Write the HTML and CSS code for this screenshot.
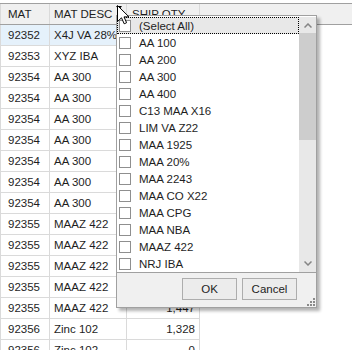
FILE: index.html
```html
<!DOCTYPE html>
<html lang="en">

<head>
  <meta charset="UTF-8">
  <meta name="viewport" content="width=device-width, initial-scale=1.0">
  <title>Shipments | Filter</title>
  <link rel="stylesheet" href="styles.css">
</head>

<body>
  <div class="sheet">

    <!-- Grid -->
    <div class="grid">
      <div class="row head">
        <div class="cell c-mat">MAT</div>
        <div class="cell c-desc">MAT DESC <span class="filter-btn"></span></div>
        <div class="cell c-qty">SHIP QTY</div>
        <div class="cell c-fill"></div>
      </div>

      <!-- qty values under the open dropdown are not shown -->
      <div class="row selected">
        <div class="cell c-mat">92352</div>
        <div class="cell c-desc">X4J VA 28%</div>
        <div class="cell c-qty"></div>
        <div class="cell c-fill"></div>
      </div>
      <div class="row">
        <div class="cell c-mat">92353</div>
        <div class="cell c-desc">XYZ IBA</div>
        <div class="cell c-qty"></div>
        <div class="cell c-fill"></div>
      </div>
      <div class="row">
        <div class="cell c-mat">92354</div>
        <div class="cell c-desc">AA 300</div>
        <div class="cell c-qty"></div>
        <div class="cell c-fill"></div>
      </div>
      <div class="row">
        <div class="cell c-mat">92354</div>
        <div class="cell c-desc">AA 300</div>
        <div class="cell c-qty"></div>
        <div class="cell c-fill"></div>
      </div>
      <div class="row">
        <div class="cell c-mat">92354</div>
        <div class="cell c-desc">AA 300</div>
        <div class="cell c-qty"></div>
        <div class="cell c-fill"></div>
      </div>
      <div class="row">
        <div class="cell c-mat">92354</div>
        <div class="cell c-desc">AA 300</div>
        <div class="cell c-qty"></div>
        <div class="cell c-fill"></div>
      </div>
      <div class="row">
        <div class="cell c-mat">92354</div>
        <div class="cell c-desc">AA 300</div>
        <div class="cell c-qty"></div>
        <div class="cell c-fill"></div>
      </div>
      <div class="row">
        <div class="cell c-mat">92354</div>
        <div class="cell c-desc">AA 300</div>
        <div class="cell c-qty"></div>
        <div class="cell c-fill"></div>
      </div>
      <div class="row">
        <div class="cell c-mat">92354</div>
        <div class="cell c-desc">AA 300</div>
        <div class="cell c-qty"></div>
        <div class="cell c-fill"></div>
      </div>
      <div class="row">
        <div class="cell c-mat">92355</div>
        <div class="cell c-desc">MAAZ 422</div>
        <div class="cell c-qty"></div>
        <div class="cell c-fill"></div>
      </div>
      <div class="row">
        <div class="cell c-mat">92355</div>
        <div class="cell c-desc">MAAZ 422</div>
        <div class="cell c-qty"></div>
        <div class="cell c-fill"></div>
      </div>
      <div class="row">
        <div class="cell c-mat">92355</div>
        <div class="cell c-desc">MAAZ 422</div>
        <div class="cell c-qty"></div>
        <div class="cell c-fill"></div>
      </div>
      <div class="row">
        <div class="cell c-mat">92355</div>
        <div class="cell c-desc">MAAZ 422</div>
        <div class="cell c-qty"></div>
        <div class="cell c-fill"></div>
      </div>
      <div class="row">
        <div class="cell c-mat">92355</div>
        <div class="cell c-desc">MAAZ 422</div>
        <div class="cell c-qty">1,447</div>
        <div class="cell c-fill"></div>
      </div>
      <div class="row">
        <div class="cell c-mat">92356</div>
        <div class="cell c-desc">Zinc 102</div>
        <div class="cell c-qty">1,328</div>
        <div class="cell c-fill"></div>
      </div>
      <div class="row">
        <div class="cell c-mat">92356</div>
        <div class="cell c-desc">Zinc 102</div>
        <div class="cell c-qty">0</div>
        <div class="cell c-fill"></div>
      </div>
    </div>

    <!-- Filter dropdown -->
    <div class="filter-popup">
      <div class="list-area">
        <div class="list">
          <div class="item focused"><span class="check"></span>(Select All)</div>
          <div class="item"><span class="check"></span>AA 100</div>
          <div class="item"><span class="check"></span>AA 200</div>
          <div class="item"><span class="check"></span>AA 300</div>
          <div class="item"><span class="check"></span>AA 400</div>
          <div class="item"><span class="check"></span>C13 MAA X16</div>
          <div class="item"><span class="check"></span>LIM VA Z22</div>
          <div class="item"><span class="check"></span>MAA 1925</div>
          <div class="item"><span class="check"></span>MAA 20%</div>
          <div class="item"><span class="check"></span>MAA 2243</div>
          <div class="item"><span class="check"></span>MAA CO X22</div>
          <div class="item"><span class="check"></span>MAA CPG</div>
          <div class="item"><span class="check"></span>MAA NBA</div>
          <div class="item"><span class="check"></span>MAAZ 422</div>
          <div class="item"><span class="check"></span>NRJ IBA</div>
        </div>
        <div class="scrollbar">
          <div class="sb-btn">
            <svg width="8" height="5" viewBox="0 0 8 5"><path d="M0.5 4.5 L4 1 L7.5 4.5" fill="none" stroke="#858585" stroke-width="1.5"/></svg>
          </div>
          <div class="sb-thumb"></div>
          <div class="sb-track"></div>
          <div class="sb-btn">
            <svg width="8" height="5" viewBox="0 0 8 5"><path d="M0.5 0.5 L4 4 L7.5 0.5" fill="none" stroke="#858585" stroke-width="1.5"/></svg>
          </div>
        </div>
      </div>
      <div class="popup-footer">
        <button class="btn btn-ok">OK</button>
        <button class="btn btn-cancel">Cancel</button>
        <svg class="grip" width="9" height="9" viewBox="0 0 9 9">
          <rect x="7" y="1" width="2" height="2" fill="#8a8a8a"/>
          <rect x="4" y="4" width="2" height="2" fill="#8a8a8a"/>
          <rect x="7" y="4" width="2" height="2" fill="#8a8a8a"/>
          <rect x="1" y="7" width="2" height="2" fill="#8a8a8a"/>
          <rect x="4" y="7" width="2" height="2" fill="#8a8a8a"/>
          <rect x="7" y="7" width="2" height="2" fill="#8a8a8a"/>
        </svg>
      </div>
    </div>

    <!-- Mouse pointer -->
    <svg class="cursor" width="13" height="20" viewBox="0 0 13 20">
      <path d="M0.5 0.5 L0.5 16.5 L4.5 12.8 L7.2 18.8 L9.6 17.7 L7 11.9 L12 11.9 Z" fill="#fff" stroke="#000" stroke-width="1" stroke-linejoin="miter"/>
    </svg>
  </div>
</body>

</html>
```

FILE: styles.css
```css
body {
  margin: 0;
  font-family: "Liberation Sans", Arial, sans-serif;
  font-size: 11.5px;
  color: #1e1e1e;
  background: #fff;
  overflow: hidden;
}

.sheet {
  position: relative;
  height: 350px;
  overflow: hidden;
  padding-top: 3px;
  box-sizing: border-box;
}

/* Grid */
.row {
  display: grid;
  grid-template-columns: 50px 77px 73px 1fr;
  height: 21px;
}

.cell {
  box-sizing: border-box;
  display: flex;
  align-items: center;
  white-space: nowrap;
  overflow: hidden;
  border-right: 1px solid #dadada;
  border-bottom: 1px solid #dadada;
}

.c-mat {
  border-left: 1px solid #dadada;
  padding-left: 7px;
}

.c-desc {
  padding-left: 4px;
}

.c-qty {
  justify-content: flex-end;
  padding-right: 4px;
}

.c-fill {
  border: none;
}

.row.head {
  height: 22px;
  background: #f0f0f0;
  border-top: 1px solid #a0a0a0;
  border-bottom: 1px solid #a0a0a0;
  box-sizing: border-box;
}

.head .cell {
  border-bottom: none;
}

.head .c-desc {
  justify-content: space-between;
  padding-right: 4px;
}

.head .c-qty {
  justify-content: flex-start;
  padding-left: 5px;
}

.filter-btn {
  align-self: flex-start;
  margin-top: 2px;
  width: 0;
  height: 0;
  border-left: 3px solid transparent;
  border-right: 3px solid transparent;
  border-top: 4px solid #000;
}

.row.selected .cell {
  background: #e5f1fb;
}

.row.selected .c-fill {
  background: none;
}

/* Filter popup */
.filter-popup {
  position: absolute;
  left: 116px;
  top: 15px;
  width: 201px;
  height: 293px;
  box-sizing: border-box;
  border: 1px solid #a0a0a0;
  background: #fff;
  box-shadow: 3px 3px 3px rgba(0, 0, 0, 0.3);
  display: flex;
  flex-direction: column;
}

.list-area {
  display: flex;
  margin-top: 1px;
  height: 255px;
}

.list {
  flex: 1;
}

.item {
  height: 17px;
  display: flex;
  align-items: center;
  white-space: nowrap;
}

.item.focused {
  background: #e8e8e8;
  outline: 1px dotted #000;
  outline-offset: -1px;
}

.check {
  width: 12px;
  height: 12px;
  box-sizing: border-box;
  border: 1px solid #8f8f8f;
  background: #fff;
  margin-left: 2px;
  margin-right: 8px;
}

.scrollbar {
  width: 17px;
  background: #e8e8e8;
  display: flex;
  flex-direction: column;
}

.sb-btn {
  height: 16px;
  display: flex;
  align-items: center;
  justify-content: center;
}

.sb-btn:last-child {
  height: 17px;
}

.sb-thumb {
  height: 107px;
  background: #cdcdcd;
}

.sb-track {
  flex: 1;
}

.popup-footer {
  position: relative;
  flex: 1;
  background: #f0f0f0;
  border-top: 1px solid #a0a0a0;
  display: flex;
  justify-content: flex-end;
  align-items: flex-start;
  gap: 5px;
  padding: 5px 19px 0 0;
}

.btn {
  font-family: inherit;
  font-size: 11.5px;
  color: #1e1e1e;
  height: 22px;
  background: #ececec;
  border: 1px solid #adadad;
  border-radius: 0;
  padding: 0;
}

.btn-ok {
  width: 55px;
}

.btn-cancel {
  width: 55px;
}

.grip {
  position: absolute;
  right: 1px;
  bottom: 1px;
}

.cursor {
  position: absolute;
  left: 117px;
  top: 5px;
}
```
